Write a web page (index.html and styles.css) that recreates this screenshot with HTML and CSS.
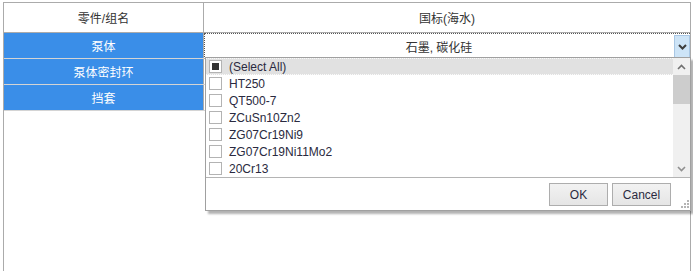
FILE: index.html
```html
<!DOCTYPE html>
<html lang="zh">

<head>
    <meta charset="utf-8">
    <title>国标(海水)</title>
    <link rel="stylesheet" href="styles.css">
</head>

<body>

    <div class="grid">
        <div class="head">
            <div class="c0">零件/组名</div>
            <div class="c1">国标(海水)</div>
        </div>

        <div class="row">
            <div class="c0 valgt">泵体</div>
            <div class="c1 editor">
                <span class="val">石墨, 碳化硅</span>
                <span class="dd">
                    <svg width="9" height="6" viewBox="0 0 9 6"><path d="M1 1 L4.5 4.5 L8 1" fill="none" stroke="#3c3c3c" stroke-width="2"/></svg>
                </span>
            </div>
        </div>
        <div class="row">
            <div class="c0 valgt">泵体密封环</div>
            <div class="c1"></div>
        </div>
        <div class="row">
            <div class="c0 valgt">挡套</div>
            <div class="c1"></div>
        </div>

        <!-- dropdown popup -->
        <div class="popup">
            <div class="liste">
                <div class="items">
                    <div class="item aktiv"><span class="cb delvis"></span>(Select All)</div>
                    <div class="item"><span class="cb"></span>HT250</div>
                    <div class="item"><span class="cb"></span>QT500-7</div>
                    <div class="item"><span class="cb"></span>ZCuSn10Zn2</div>
                    <div class="item"><span class="cb"></span>ZG07Cr19Ni9</div>
                    <div class="item"><span class="cb"></span>ZG07Cr19Ni11Mo2</div>
                    <div class="item"><span class="cb"></span>20Cr13</div>
                </div>
                <div class="scroll">
                    <div class="pil">
                        <svg width="9" height="6" viewBox="0 0 9 6"><path d="M1 5 L4.5 1.5 L8 5" fill="none" stroke="#707070" stroke-width="1.6"/></svg>
                    </div>
                    <div class="spor"><div class="thumb"></div></div>
                    <div class="pil">
                        <svg width="9" height="6" viewBox="0 0 9 6"><path d="M1 1 L4.5 4.5 L8 1" fill="none" stroke="#909090" stroke-width="1.6"/></svg>
                    </div>
                </div>
            </div>
            <div class="bund">
                <button class="knap">OK</button>
                <button class="knap">Cancel</button>
                <svg class="grip" width="9" height="9" viewBox="0 0 9 9">
                    <rect x="6" y="0" width="2" height="2" fill="#b4b4b4"/>
                    <rect x="3" y="3" width="2" height="2" fill="#b4b4b4"/>
                    <rect x="6" y="3" width="2" height="2" fill="#b4b4b4"/>
                    <rect x="0" y="6" width="2" height="2" fill="#b4b4b4"/>
                    <rect x="3" y="6" width="2" height="2" fill="#b4b4b4"/>
                    <rect x="6" y="6" width="2" height="2" fill="#b4b4b4"/>
                </svg>
            </div>
        </div>
    </div>

</body>

</html>
```

FILE: styles.css
```css
body {
    margin: 0;
    background-color: white;
    font-family: "Liberation Sans", "Noto Sans CJK SC", sans-serif;
    font-size: 12px;
    color: #333;
    overflow: hidden;
}

.grid {
    position: relative;
    margin: 2px 0 0 3px;
    width: 686px;
    height: 268px;
    border: 1px solid #ababab;
    border-bottom: none;
}

.head {
    display: flex;
    height: 29px;
    border-bottom: 1px solid #ababab;
}

.row {
    display: flex;
    height: 25px;
    border-bottom: 1px solid #d4d4d4;
}

.c0 {
    width: 199px;
    border-right: 1px solid #ababab;
    display: flex;
    align-items: center;
    justify-content: center;
}

.c1 {
    flex: 1;
    display: flex;
    align-items: center;
    justify-content: center;
}

.row .c1 {
    border-bottom: 1px solid #fff;
}

.valgt {
    background-color: #3a8ee8;
    color: white;
}

.editor {
    position: relative;
    border-top: 1px dotted #555;
    border-left: 1px dotted #555;
    margin-bottom: -1px;
    padding-right: 17px;
}

.val {
    flex: 1;
    text-align: center;
}

.dd {
    position: absolute;
    right: 0;
    top: 1px;
    width: 16px;
    height: 23px;
    background-color: #cde4f7;
    border: 1px solid #a9c7e4;
    box-sizing: border-box;
    display: flex;
    align-items: center;
    justify-content: center;
}

.popup {
    position: absolute;
    left: 201px;
    top: 54px;
    width: 484px;
    border: 1px solid #a0a0a0;
    background-color: white;
    box-shadow: 3px 3px 2px rgba(0, 0, 0, 0.3);
}

.liste {
    display: flex;
    height: 119px;
}

.items {
    flex: 1;
}

.item {
    height: 17px;
    display: flex;
    align-items: center;
    padding-left: 3px;
    box-sizing: border-box;
    color: #2a2a40;
}

.aktiv {
    background-color: #e1e1e1;
    border-top: 1px dotted #fafafa;
    border-bottom: 1px dotted #fafafa;
}

.cb {
    width: 11px;
    height: 11px;
    border: 1px solid #b3b3b3;
    background-color: white;
    margin-right: 7px;
    display: flex;
    align-items: center;
    justify-content: center;
}

.delvis::after {
    content: "";
    width: 7px;
    height: 7px;
    background-color: #333;
}

.scroll {
    width: 17px;
    display: flex;
    flex-direction: column;
    background-color: #f0f0f0;
}

.pil {
    height: 17px;
    display: flex;
    align-items: center;
    justify-content: center;
}

.spor {
    flex: 1;
}

.thumb {
    height: 29px;
    background-color: #cdcdcd;
}

.bund {
    position: relative;
    height: 33px;
    border-top: 1px solid #b4b4b4;
    display: flex;
    justify-content: flex-end;
    align-items: flex-start;
    gap: 4px;
    padding-right: 19px;
    box-sizing: border-box;
}

.knap {
    margin-top: 5px;
    width: 59px;
    height: 23px;
    border: 1px solid #adadad;
    background: linear-gradient(#f2f2f2, #e5e5e5);
    font-family: "Liberation Sans", sans-serif;
    font-size: 12px;
    color: #2a2a40;
    padding: 0;
}

.grip {
    position: absolute;
    right: 0;
    bottom: 1px;
}
```
